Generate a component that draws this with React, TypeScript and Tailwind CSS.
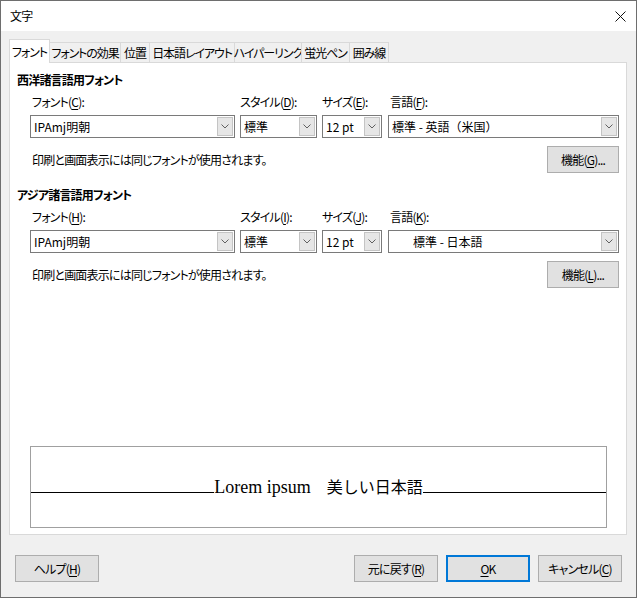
import React from "react";

const font = { fontFamily: '"Noto Sans CJK JP", "Noto Sans", sans-serif', fontFeatureSettings: '"palt"' };

const tabs: { label: string; w: string; active?: boolean }[] = [
  { label: "フォント", w: "w-[41px]", active: true },
  { label: "フォントの効果", w: "w-[72px]" },
  { label: "位置", w: "w-[30px]" },
  { label: "日本語レイアウト", w: "w-[86px]" },
  { label: "ハイパーリンク", w: "w-[68px]" },
  { label: "蛍光ペン", w: "w-[49px]" },
  { label: "囲み線", w: "w-[40px]" },
];

function Mn({ text, k, tail = "" }: { text: string; k: string; tail?: string }) {
  return (
    <span className="whitespace-nowrap">
      {text}(<span className="underline underline-offset-2">{k}</span>){tail}
    </span>
  );
}

function Combo({ w, value, indent = "pl-[3px]" }: { w: string; value: string; indent?: string }) {
  return (
    <div className={`${w} flex h-[23px] items-stretch border border-[#7a7a7a] bg-white`}>
      <div
        className={`flex flex-1 items-center whitespace-nowrap ${indent} text-[12px] leading-none tracking-normal text-black`}
        style={{ fontFeatureSettings: "normal" }}
      >
        {value}
      </div>
      <div className="m-px flex w-[16px] items-center justify-center border border-[#c4c4c4] bg-[#e6e6e6]">
        <svg width="8" height="5" viewBox="0 0 8 5">
          <path d="M0.5 0.5 L4 4 L7.5 0.5" fill="none" stroke="#606060" strokeWidth="1" />
        </svg>
      </div>
    </div>
  );
}

function Button({ children, w = "w-[84px]", h = "h-[27px]", primary }: { children: React.ReactNode; w?: string; h?: string; primary?: boolean }) {
  return (
    <div
      className={`${w} ${h} flex items-center justify-center bg-[#e1e1e1] text-[12px] leading-none text-black ${
        primary ? "border-2 border-[#0078d7]" : "border border-[#adadad]"
      }`}
    >
      {children}
    </div>
  );
}

function Section({
  title,
  keys,
  lang,
  langIndent,
  feature,
  first,
}: {
  title: string;
  keys: [string, string, string, string];
  lang: string;
  langIndent: string;
  feature: string;
  first?: boolean;
}) {
  return (
    <div className={first ? "" : "mt-[14px]"}>
      <div className="pl-[7px] text-[12px] font-bold leading-[16px]">{title}</div>
      <div className="ml-[20px] mt-[6px] flex gap-[5px]">
        <div className="flex flex-col">
          <div className="pl-[2px] text-[12px] leading-[16px]">
            <Mn text="フォント" k={keys[0]} tail=":" />
          </div>
          <div className="mt-[5px]">
            <Combo w="w-[205px]" value="IPAmj明朝" />
          </div>
        </div>
        <div className="flex flex-col">
          <div className="text-[12px] leading-[16px]">
            <Mn text="スタイル" k={keys[1]} tail=":" />
          </div>
          <div className="mt-[5px]">
            <Combo w="w-[77px]" value="標準" />
          </div>
        </div>
        <div className="flex flex-col">
          <div className="text-[12px] leading-[16px]">
            <Mn text="サイズ" k={keys[2]} tail=":" />
          </div>
          <div className="mt-[5px]">
            <Combo w="w-[60px]" value="12 pt" />
          </div>
        </div>
        <div className="ml-px flex flex-col">
          <div className="pl-[2px] text-[12px] leading-[16px]">
            <Mn text="言語" k={keys[3]} tail=":" />
          </div>
          <div className="mt-[5px]">
            <Combo w="w-[231px]" value={lang} indent={langIndent} />
          </div>
        </div>
      </div>
      <div className="ml-[22px] mr-[7px] mt-[8px] flex items-center justify-between">
        <div className="whitespace-nowrap text-[12px] leading-none">印刷と画面表示には同じフォントが使用されます。</div>
        <Button w="w-[72px]">
          <Mn text="機能" k={feature} tail="..." />
        </Button>
      </div>
    </div>
  );
}

export default function App() {
  return (
    <div
      className="flex h-[598px] w-[637px] flex-col border border-[#6e6e6e] bg-[#f0f0f0] tracking-[-0.05em] text-black"
      style={font}
    >
      <div className="flex h-[30px] items-center justify-between bg-white pl-[9px] pr-[10px]">
        <span className="text-[12px] leading-none">文字</span>
        <svg width="11" height="11" viewBox="0 0 11 11">
          <path d="M0.5 0.5 L10.5 10.5 M10.5 0.5 L0.5 10.5" stroke="#111" strokeWidth="1" />
        </svg>
      </div>

      <div className="flex flex-1 flex-col px-[8px] pt-[8px]">
        <div className="flex h-[23px] items-end">
          {tabs.map((t) => (
            <div
              key={t.label}
              className={`${t.w} flex shrink-0 items-center justify-center whitespace-nowrap border-x border-t border-[#d9d9d9] text-[12px] leading-none tracking-[-0.09em] ${
                t.active ? "relative z-10 -mb-px h-[24px] bg-white" : "-ml-px h-[20px] bg-[#f0f0f0]"
              }`}
            >
              {t.label}
            </div>
          ))}
        </div>

        <div className="flex h-[473px] w-[618px] flex-col border border-[#d9d9d9] bg-white pt-[9px]">
          <Section
            first
            title="西洋諸言語用フォント"
            keys={["C", "D", "E", "F"]}
            lang="標準 - 英語（米国）"
            langIndent="pl-[3px]"
            feature="G"
          />
          <Section
            title="アジア諸言語用フォント"
            keys={["H", "I", "J", "K"]}
            lang="標準 - 日本語"
            langIndent="pl-[24px]"
            feature="L"
          />

          <div className="mb-[6px] ml-[20px] mt-auto flex h-[82px] w-[577px] items-center border border-[#a0a0a0] bg-white tracking-normal">
            <div className="flex w-full items-baseline">
              <div className="h-0 flex-1 border-b border-black" />
              <span className="whitespace-nowrap leading-none">
                <span className="text-[18px]" style={{ fontFamily: '"Liberation Serif", serif' }}>
                  Lorem ipsum
                </span>
                <span className="text-[16px]" style={{ fontFamily: '"Noto Sans CJK JP", sans-serif', fontFeatureSettings: "normal" }}>
                  {"\u3000美しい日本語"}
                </span>
              </span>
              <div className="h-0 flex-1 border-b border-black" />
            </div>
          </div>
        </div>

        <div className="mt-[20px] flex items-center pl-[6px] pr-[6px]">
          <Button>
            <Mn text="ヘルプ" k="H" />
          </Button>
          <div className="flex-1" />
          <div className="flex gap-[8px]">
            <Button>
              <Mn text="元に戻す" k="R" />
            </Button>
            <Button primary>
              <span>
                <span className="underline underline-offset-2">O</span>K
              </span>
            </Button>
            <Button>
              <Mn text="キャンセル" k="C" />
            </Button>
          </div>
        </div>
      </div>
    </div>
  );
}
